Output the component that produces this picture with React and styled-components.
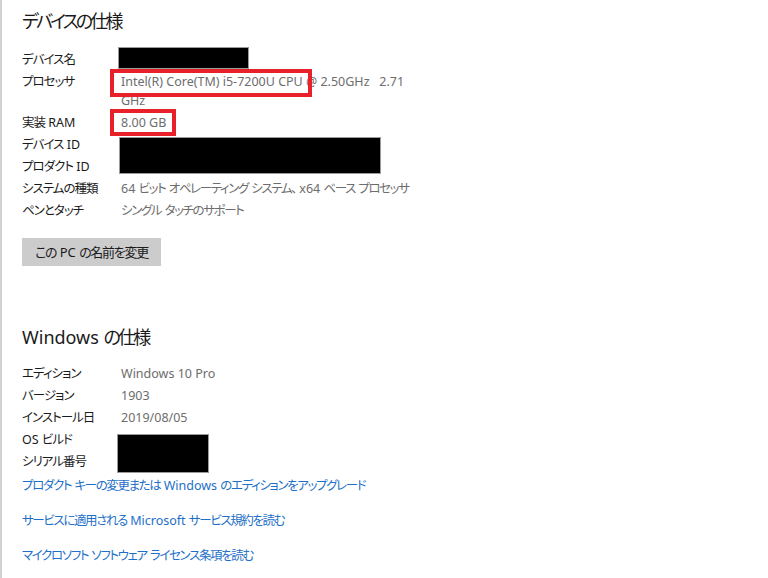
import React from 'react';
import styled, { createGlobalStyle } from 'styled-components';

const GlobalStyle = createGlobalStyle`
  html, body {
    margin: 0;
    padding: 0;
    background: #fff;
  }

  body {
    font-family: "Noto Sans", "Noto Sans CJK JP", sans-serif;
    font-feature-settings: "palt";
    -webkit-font-smoothing: antialiased;
  }
`;

// Japanese runs are set tighter than the latin ones (the original UI font has narrow kana)
const CJK_RUN = /([\u3000-\u30ff\u3400-\u9fff\uff00-\uffef]+)/;

const Jp = styled.span`
  letter-spacing: var(--jp-track, -0.08em);
`;

const Txt = ({ children }) =>
  String(children)
    .split(CJK_RUN)
    .map((part, i) => (CJK_RUN.test(part) ? <Jp key={i}>{part}</Jp> : part));

const Page = styled.div`
  box-sizing: border-box;
  min-height: 578px;
  padding: 7px 0 0 20px;
  border-left: 2px solid #d2d2d2;
`;

const Heading = styled.h2`
  --jp-track: -0.16em;
  margin: ${p => p.$top || 0}px 0 0;
  font-size: 18px;
  font-weight: 400;
  line-height: 28px;
  color: #1a1a1a;
`;

const SpecGrid = styled.div`
  display: grid;
  grid-template-columns: 99px auto;
  grid-auto-rows: minmax(22px, auto);
  justify-content: start;
  margin-top: ${p => p.$top}px;
  font-size: 12.5px;
`;

const Label = styled.div`
  line-height: 22px;
  color: #1b1b1b;
  white-space: nowrap;
`;

const Value = styled.div`
  --jp-track: -0.11em;
  grid-column: 2;
  line-height: ${p => (p.$wrap ? '19px' : '22px')};
  padding: ${p => (p.$wrap ? '1px 0 2px' : '0')};
  color: #6d6d6d;
  white-space: nowrap;
`;

const Highlight = styled.span`
  position: relative;
  display: inline-block;

  &::after {
    content: '';
    position: absolute;
    top: ${p => p.$t}px;
    bottom: ${p => p.$b}px;
    left: -11px;
    right: ${p => p.$r}px;
    border: 4px solid #e8202a;
  }
`;

const Redact = styled.div`
  grid-column: 2;
  grid-row: span ${p => p.$rows || 1};
  align-self: start;
  justify-self: start;
  box-sizing: border-box;
  width: ${p => p.$w}px;
  height: ${p => p.$h}px;
  margin: ${p => p.$m};
  background: #000;
  border: 1px solid #9a9a9a;
`;

const RenameButton = styled.button`
  --jp-track: -0.1em;
  display: block;
  margin-top: 16px;
  width: 139px;
  height: 28px;
  padding: 0;
  border: none;
  background: #cccccc;
  color: #1b1b1b;
  font-family: inherit;
  font-feature-settings: "palt";
  font-size: 13px;
  line-height: 28px;
`;

const Links = styled.div`
  display: flex;
  flex-direction: column;
  align-items: flex-start;
  gap: 13px;
  margin-top: 2px;
`;

const Link = styled.a`
  --jp-track: -0.11em;
  font-size: 12.5px;
  line-height: 22px;
  color: #1e6fc8;
  text-decoration: none;
`;

const windowsRows = [
  ['エディション', 'Windows 10 Pro'],
  ['バージョン', '1903'],
  ['インストール日', '2019/08/05'],
];

export default function App() {
  return (
    <Page>
      <GlobalStyle />
      <Heading><Txt>デバイスの仕様</Txt></Heading>
      <SpecGrid $top={14}>
        <Label><Txt>デバイス名</Txt></Label>
        <Redact $w={131} $h={22} $m="-2px 0 0 -3px" />
        <Label><Txt>プロセッサ</Txt></Label>
        <Value $wrap>
          <Highlight $t={-3} $b={-6} $r={-9}>Intel(R) Core(TM) i5-7200U CPU</Highlight>
          {' @ 2.50GHz\u00a0\u00a0 2.71'}
          <br />
          GHz
        </Value>
        <Label><Txt>実装 RAM</Txt></Label>
        <Value>
          <Highlight $t={-3} $b={-2} $r={-10}>8.00 GB</Highlight>
        </Value>
        <Label><Txt>デバイス ID</Txt></Label>
        <Redact $rows={2} $w={262} $h={37} $m="3px 0 0 -2px" />
        <Label><Txt>プロダクト ID</Txt></Label>
        <Label><Txt>システムの種類</Txt></Label>
        <Value><Txt>64 ビット オペレーティング システム、 x64 ベース プロセッサ</Txt></Value>
        <Label><Txt>ペンとタッチ</Txt></Label>
        <Value><Txt>シングル タッチのサポート</Txt></Value>
      </SpecGrid>
      <RenameButton><Txt>この PC の名前を変更</Txt></RenameButton>

      <Heading $top={57}><Txt>Windows の仕様</Txt></Heading>
      <SpecGrid $top={12}>
        {windowsRows.map(([label, value]) => (
          <React.Fragment key={label}>
            <Label><Txt>{label}</Txt></Label>
            <Value>{value}</Value>
          </React.Fragment>
        ))}
        <Label><Txt>OS ビルド</Txt></Label>
        <Redact $rows={2} $w={92} $h={39} $m="5px 0 0 -4px" />
        <Label><Txt>シリアル番号</Txt></Label>
      </SpecGrid>
      <Links>
        <Link href="#"><Txt>プロダクト キーの変更または Windows のエディションをアップグレード</Txt></Link>
        <Link href="#"><Txt>サービスに適用される Microsoft サービス規約を読む</Txt></Link>
        <Link href="#"><Txt>マイクロソフト ソフトウェア ライセンス条項を読む</Txt></Link>
      </Links>
    </Page>
  );
}
